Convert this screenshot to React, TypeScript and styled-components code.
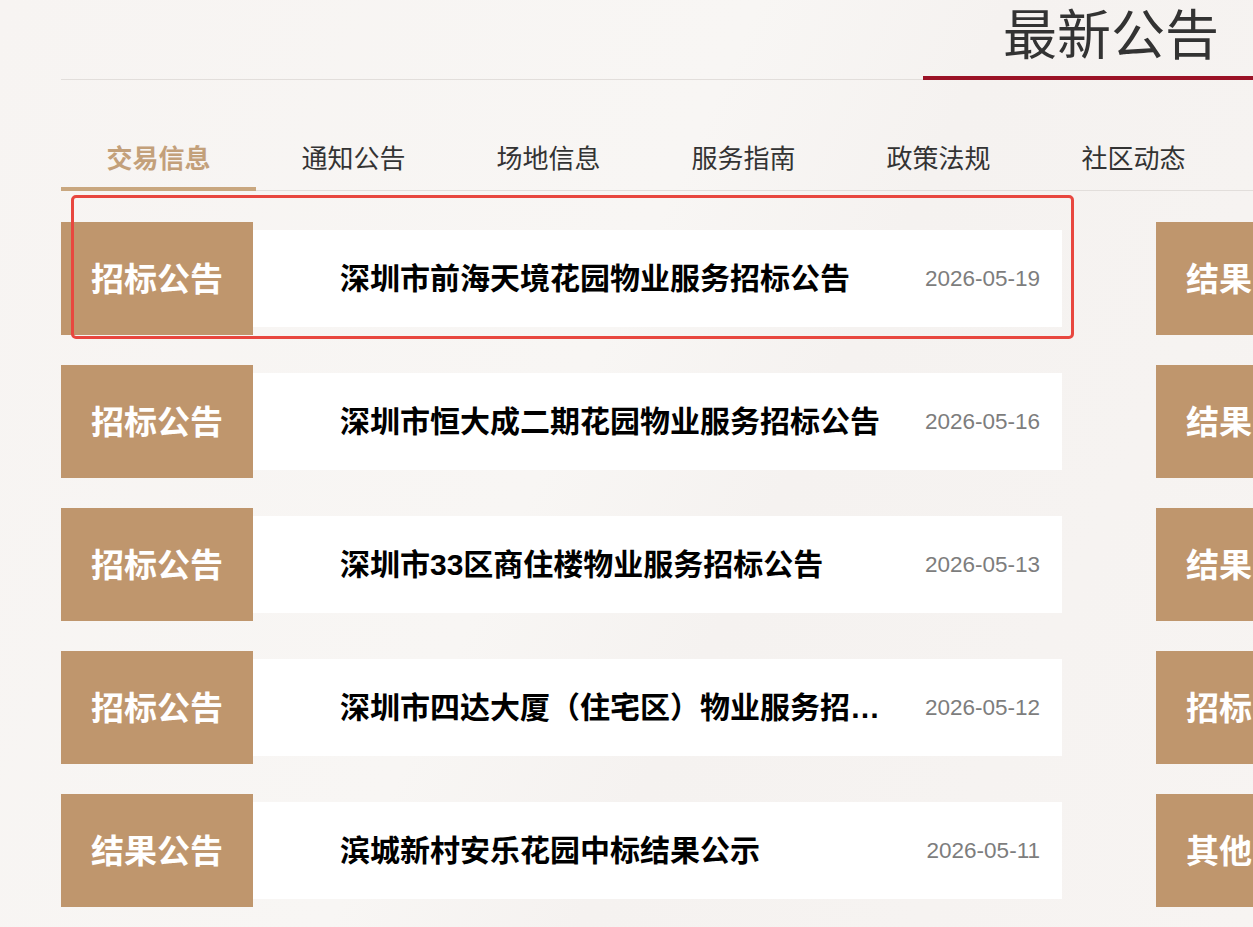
import styled, { createGlobalStyle } from 'styled-components';

const GlobalStyle = createGlobalStyle`
    html, body {
        margin: 0;
        padding: 0;
        background: #f7f4f2;
        overflow: hidden;
    }
    body {
        font-family: "Noto Sans CJK SC", "Noto Sans", sans-serif;
    }
    * {
        box-sizing: border-box;
    }
`;

const Page = styled.main`
    width: 1253px;
    height: 927px;
    overflow: hidden;
    background: linear-gradient(115deg, #f7f4f2 0%, #f8f6f4 45%, #f5f2f0 60%, #f7f4f2 100%);
`;

const Inner = styled.div`
    width: 2200px;
    margin-left: 61px;
`;

const Header = styled.header`
    height: 80px;
    display: flex;
    align-items: flex-end;
    border-bottom: 1px solid #e2dedb;
    padding-left: 862px;
`;

const TitleBox = styled.div`
    width: 420px;
    padding: 0 0 17px 80px;
    margin-bottom: -1px;
    border-bottom: 4px solid #9b1226;

    h1 {
        margin: 0;
        font-size: 54px;
        line-height: 1;
        font-weight: 400;
        color: #333;
    }
`;

const TabBar = styled.nav`
    display: flex;
    margin-top: 49px;
    border-bottom: 1px solid #e2dedb;
`;

const Tab = styled.div<{ $active?: boolean }>`
    width: 195px;
    padding: 10px 0 12px;
    margin-bottom: -1px;
    text-align: center;
    font-size: 26px;
    line-height: 36px;
    font-weight: ${(props) => (props.$active ? 700 : 400)};
    color: ${(props) => (props.$active ? '#c3a07a' : '#333')};
    border-bottom: 4px solid
        ${(props) => (props.$active ? '#c9a77f' : 'transparent')};
`;

const Lists = styled.div`
    position: relative;
    display: flex;
    gap: 94px;
    margin-top: 31px;
`;

const Column = styled.div`
    width: 1001px;
    display: flex;
    flex-direction: column;
    gap: 30px;
`;

const Row = styled.div`
    display: flex;
    align-items: center;
    height: 113px;
`;

const Tag = styled.div`
    flex: 0 0 192px;
    height: 100%;
    display: flex;
    align-items: center;
    justify-content: center;
    padding-bottom: 4px;
    background: #bf966d;
    color: #fff;
    font-size: 33px;
    font-weight: 700;
`;

const Card = styled.div`
    flex: 1;
    height: 97px;
    display: flex;
    align-items: center;
    justify-content: space-between;
    background: #fff;
    padding: 0 22px 0 87px;
`;

const ItemTitle = styled.div`
    width: 545px;
    padding-bottom: 5px;
    font-family: "Liberation Sans", "Noto Sans CJK SC", sans-serif;
    font-size: 30px;
    font-weight: 700;
    color: #000;
    white-space: nowrap;
    overflow: hidden;
    text-overflow: ellipsis;
`;

const ItemDate = styled.span`
    font-family: "Liberation Sans", Arial, sans-serif;
    font-size: 22.5px;
    color: #7d7d7d;
`;

const Highlight = styled.div`
    position: absolute;
    left: 10px;
    top: -27px;
    width: 1003px;
    height: 144px;
    border: 3px solid #e8473f;
    border-radius: 5px;
    pointer-events: none;
`;

const tabs = ['交易信息', '通知公告', '场地信息', '服务指南', '政策法规', '社区动态'];

const leftItems = [
    { tag: '招标公告', title: '深圳市前海天境花园物业服务招标公告', date: '2026-05-19' },
    { tag: '招标公告', title: '深圳市恒大成二期花园物业服务招标公告', date: '2026-05-16' },
    { tag: '招标公告', title: '深圳市33区商住楼物业服务招标公告', date: '2026-05-13' },
    { tag: '招标公告', title: '深圳市四达大厦（住宅区）物业服务招标公告', date: '2026-05-12' },
    { tag: '结果公告', title: '滨城新村安乐花园中标结果公示', date: '2026-05-11' },
];

const rightItems = [
    { tag: '结果公告', title: '深圳市福田区某花园物业服务中标结果公示', date: '2026-05-10' },
    { tag: '结果公告', title: '深圳市南山区某大厦物业服务中标结果公示', date: '2026-05-09' },
    { tag: '结果公告', title: '深圳市罗湖区某小区物业服务中标结果公示', date: '2026-05-08' },
    { tag: '招标公告', title: '深圳市宝安区某花园物业服务招标公告', date: '2026-05-07' },
    { tag: '其他公告', title: '关于物业服务招标有关事项的通知', date: '2026-05-06' },
];

type Item = { tag: string; title: string; date: string };

function NoticeColumn({ items }: { items: Item[] }) {
    return (
        <Column>
            {items.map((item) => (
                <Row key={item.title}>
                    <Tag>{item.tag}</Tag>
                    <Card>
                        <ItemTitle>{item.title}</ItemTitle>
                        <ItemDate>{item.date}</ItemDate>
                    </Card>
                </Row>
            ))}
        </Column>
    );
}

export default function App() {
    return (
        <Page>
            <GlobalStyle />
            <Inner>
                <Header>
                    <TitleBox>
                        <h1>最新公告</h1>
                    </TitleBox>
                </Header>
                <TabBar>
                    {tabs.map((tab, index) => (
                        <Tab key={tab} $active={index === 0}>
                            {tab}
                        </Tab>
                    ))}
                </TabBar>
                <Lists>
                    <NoticeColumn items={leftItems} />
                    <NoticeColumn items={rightItems} />
                    <Highlight />
                </Lists>
            </Inner>
        </Page>
    );
}
